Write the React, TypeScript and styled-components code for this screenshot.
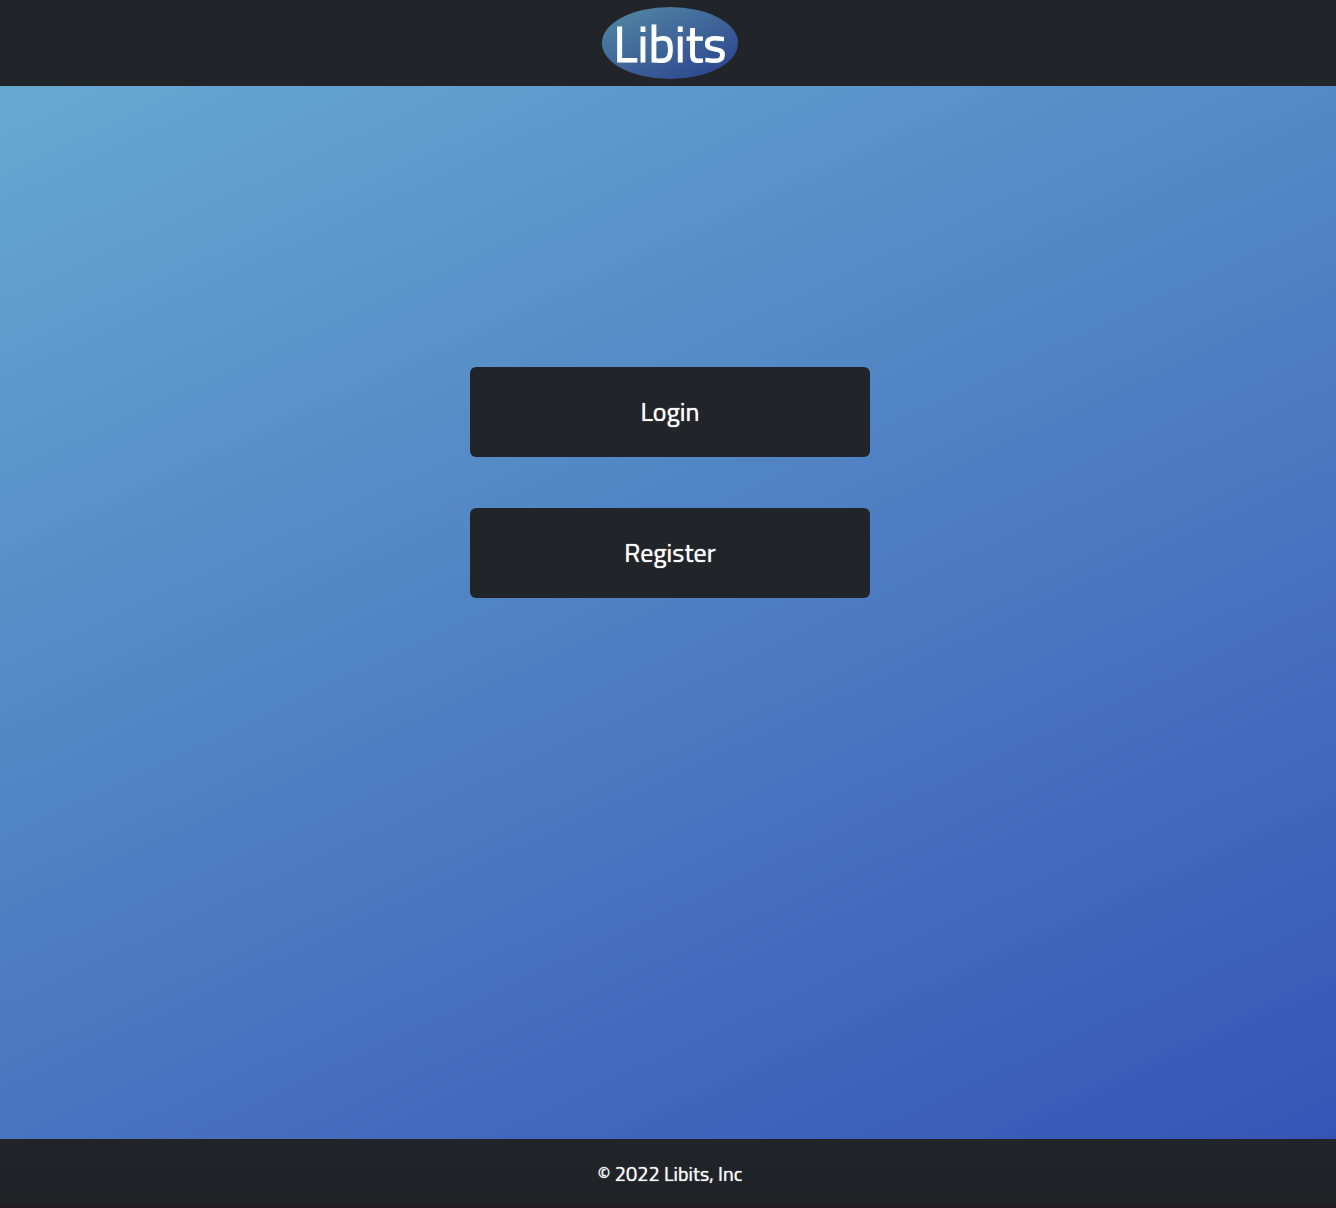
import React from 'react';
import styled, { createGlobalStyle } from 'styled-components';

const GlobalStyle = createGlobalStyle`
  *, *::before, *::after { box-sizing: border-box; }
  body {
    margin: 0;
    font-family: 'Titillium Web', 'Noto Sans', sans-serif;
    color: #fff;
  }
`;

const Page = styled.div`
  display: flex;
  flex-direction: column;
  min-height: 100vh;
`;

const Header = styled.header`
  display: flex;
  justify-content: center;
  padding: 7px 0 7px 4px;
  background: #212529;
`;

const Logo = styled.a`
  display: flex;
  align-items: center;
  justify-content: center;
  padding: 0 12px;
  border-radius: 50%;
  background: linear-gradient(155deg, #548ba5, #293f8d);
  color: #fff;
  font-size: 50px;
  line-height: 72px;
  text-decoration: none;
  -webkit-text-stroke: 1px #fff;
`;

const Main = styled.main`
  flex: 1;
  display: flex;
  flex-direction: column;
  align-items: center;
  gap: 51px;
  padding: 281px 0 48px 4px;
  background: linear-gradient(155deg, #67a8d0, #3555b6);
`;

const ActionButton = styled.button`
  width: 400px;
  max-width: 90%;
  height: 90px;
  padding: 0 6px 2px;
  border: 0;
  border-radius: 6px;
  background: #212529;
  color: #fff;
  font: inherit;
  font-size: 26px;
  text-shadow: 0 0 1px #fff;
  cursor: pointer;
`;

const Footer = styled.footer`
  padding: 21px 0 16px 4px;
  border-bottom: 4px solid #211a20;
  background: linear-gradient(#212529, #1e2225);
  color: #f8f9fa;
  font-size: 20px;
  line-height: 28px;
  text-align: center;
  text-shadow: 0 0 1px #f8f9fa;
`;

export default function App() {
  return (
    <Page>
      <GlobalStyle />
      <Header>
        <Logo href="#">Libits</Logo>
      </Header>
      <Main>
        <ActionButton type="button">Login</ActionButton>
        <ActionButton type="button">Register</ActionButton>
      </Main>
      <Footer>© 2022 Libits, Inc</Footer>
    </Page>
  );
}
